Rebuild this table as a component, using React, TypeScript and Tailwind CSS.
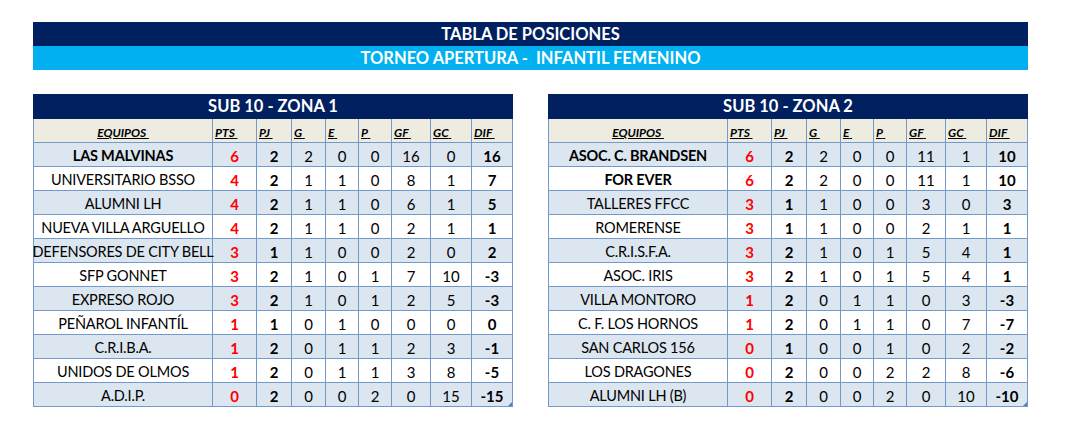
type Row = [string, number, number, number, number, number, number, number, number];

const ZONA1: Row[] = [
  ["LAS MALVINAS", 6, 2, 2, 0, 0, 16, 0, 16],
  ["UNIVERSITARIO BSSO", 4, 2, 1, 1, 0, 8, 1, 7],
  ["ALUMNI LH", 4, 2, 1, 1, 0, 6, 1, 5],
  ["NUEVA VILLA ARGUELLO", 4, 2, 1, 1, 0, 2, 1, 1],
  ["DEFENSORES DE CITY BELL", 3, 1, 1, 0, 0, 2, 0, 2],
  ["SFP GONNET", 3, 2, 1, 0, 1, 7, 10, -3],
  ["EXPRESO ROJO", 3, 2, 1, 0, 1, 2, 5, -3],
  ["PEÑAROL INFANTÍL", 1, 1, 0, 1, 0, 0, 0, 0],
  ["C.R.I.B.A.", 1, 2, 0, 1, 1, 2, 3, -1],
  ["UNIDOS DE OLMOS", 1, 2, 0, 1, 1, 3, 8, -5],
  ["A.D.I.P.", 0, 2, 0, 0, 2, 0, 15, -15],
];

const ZONA2: Row[] = [
  ["ASOC. C. BRANDSEN", 6, 2, 2, 0, 0, 11, 1, 10],
  ["FOR EVER", 6, 2, 2, 0, 0, 11, 1, 10],
  ["TALLERES FFCC", 3, 1, 1, 0, 0, 3, 0, 3],
  ["ROMERENSE", 3, 1, 1, 0, 0, 2, 1, 1],
  ["C.R.I.S.F.A.", 3, 2, 1, 0, 1, 5, 4, 1],
  ["ASOC. IRIS", 3, 2, 1, 0, 1, 5, 4, 1],
  ["VILLA MONTORO", 1, 2, 0, 1, 1, 0, 3, -3],
  ["C. F. LOS HORNOS", 1, 2, 0, 1, 1, 0, 7, -7],
  ["SAN CARLOS 156", 0, 1, 0, 0, 1, 0, 2, -2],
  ["LOS DRAGONES", 0, 2, 0, 0, 2, 2, 8, -6],
  ["ALUMNI LH (B)", 0, 2, 0, 0, 2, 0, 10, -10],
];

const HEADERS = ["PTS", "PJ", "G", "E", "P", "GF", "GC", "DIF"];
const GRID = "grid grid-cols-[179px_44px_35px_34px_33px_33px_39px_41px_41px]";
const CELL = "border-r border-b border-[#7399c9] flex items-center justify-center h-6";

function ZoneTable({ title, rows, boldNames }: { title: string; rows: Row[]; boldNames: number }) {
  return (
    <div className="w-[480px]">
      <div className="h-[25px] bg-[#002060] text-white font-bold text-[16.5px] flex items-center justify-center">
        {title}
      </div>
      <div className="border-l border-[#7399c9] relative">
        <div className={`${GRID} bg-[#eeece1] text-[12px] leading-[14px] font-bold italic`}>
          <div className={`${CELL} items-end pb-[2px]`}>
            <span className="underline">EQUIPOS&nbsp;</span>
          </div>
          {HEADERS.map((h) => (
            <div key={h} className={`${CELL} items-end justify-start pl-[2px] pb-[2px]`}>
              <span className="underline">{h}&nbsp;</span>
            </div>
          ))}
        </div>
        {rows.map((r, i) => (
          <div
            key={r[0]}
            className={`${GRID} text-[15px] ${i % 2 === 0 ? "bg-[#dce6f1]" : "bg-white"}`}
          >
            <div className={`${CELL} pt-[3px] whitespace-nowrap text-[14.5px] tracking-[-0.2px] ${i < boldNames ? "font-bold" : ""}`}>
              {r[0]}
            </div>
            <div className={`${CELL} pt-[3px] font-bold text-[#ff0000]`}>{r[1]}</div>
            <div className={`${CELL} pt-[3px] font-bold`}>{r[2]}</div>
            <div className={`${CELL} pt-[3px]`}>{r[3]}</div>
            <div className={`${CELL} pt-[3px]`}>{r[4]}</div>
            <div className={`${CELL} pt-[3px]`}>{r[5]}</div>
            <div className={`${CELL} pt-[3px]`}>{r[6]}</div>
            <div className={`${CELL} pt-[3px]`}>{r[7]}</div>
            <div className={`${CELL} pt-[3px] font-bold`}>{r[8]}</div>
          </div>
        ))}
        <div className="absolute right-[1px] bottom-[1px] w-0 h-0 border-l-[4px] border-l-transparent border-b-[4px] border-b-[#4f81bd]" />
      </div>
    </div>
  );
}

export default function App() {
  return (
    <div className="w-[1066px] h-[433px] bg-white text-black pt-[22px] pl-[33px] font-['Lato','Liberation_Sans',sans-serif]">
      <div className="w-[995px]">
        <div className="h-6 bg-[#002060] text-white font-bold text-[16.5px] flex items-center justify-center">
          TABLA DE POSICIONES
        </div>
        <div className="h-6 bg-[#00b0f0] text-white font-bold text-[16.5px] flex items-center justify-center whitespace-pre">
          TORNEO APERTURA -  INFANTIL FEMENINO
        </div>
        <div className="flex gap-[35px] mt-6">
          <ZoneTable title="SUB 10 - ZONA 1" rows={ZONA1} boldNames={1} />
          <ZoneTable title="SUB 10 - ZONA 2" rows={ZONA2} boldNames={2} />
        </div>
      </div>
    </div>
  );
}
